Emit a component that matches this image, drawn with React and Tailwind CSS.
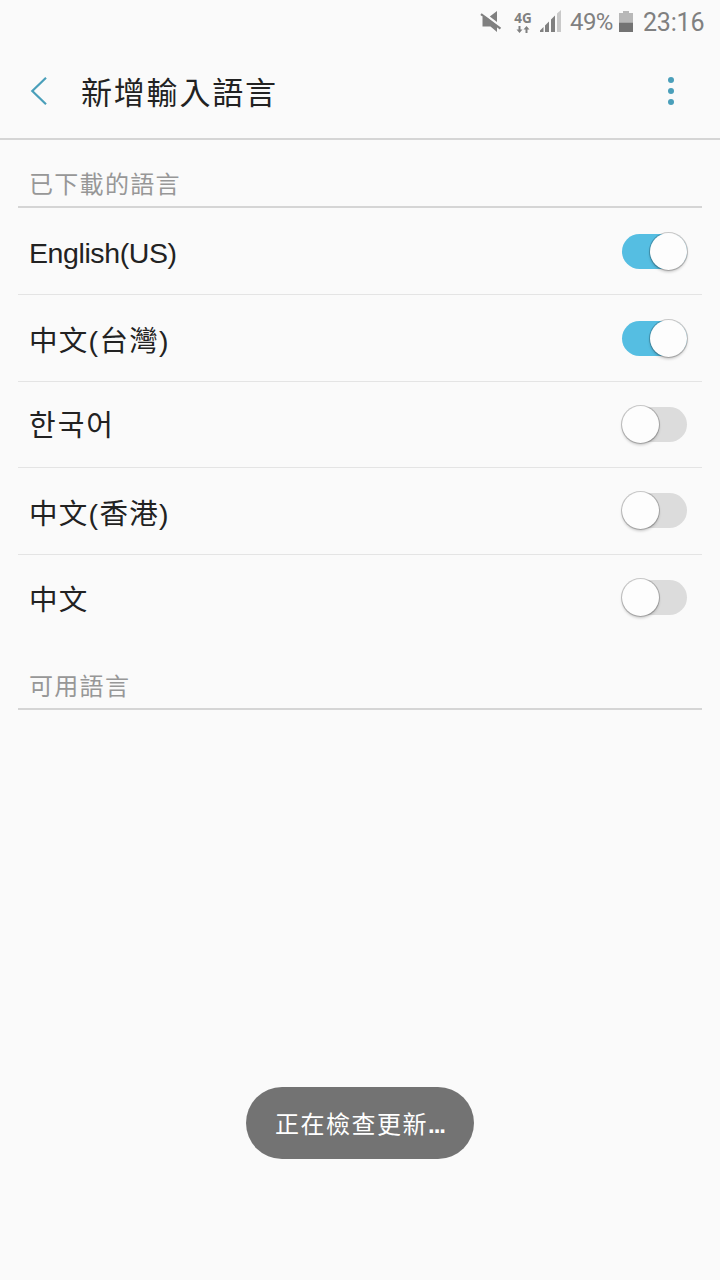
import { useState } from 'react';

const initialLanguages = [
  { id: 'en-US', label: 'English(US)', enabled: true, text: 'text-[28.5px] tracking-[-0.4px] pt-[3px]' },
  { id: 'zh-TW', label: '中文(台灣)', enabled: true, text: 'text-[28.5px] tracking-[1.3px] pt-[6px]' },
  { id: 'ko', label: '한국어', enabled: false, text: 'text-[29px] tracking-[2px] pt-[5px]' },
  { id: 'zh-HK', label: '中文(香港)', enabled: false, text: 'text-[28.5px] tracking-[1.3px] pt-[6px]' },
  { id: 'zh-CN', label: '中文', enabled: false, text: 'text-[28.5px] tracking-[1.3px] pt-[5px]' },
];

function StatusBar() {
  return (
    <div className="flex h-11 items-center justify-end pr-[15px] text-[#808080]">
      <svg width="22" height="22" viewBox="0 0 22 22" className="mr-[12px]" fill="currentColor">
        <path d="M17 0v11L9.8 5.6zM2.5 6 6 5.8 17 14.5V21l-6.5-5.5h-8z" />
        <path d="M1 3.2 20.5 17.6" stroke="currentColor" strokeWidth="2.2" />
      </svg>
      <div className="mr-2 flex w-[18px] flex-col items-center">
        <span className="font-['Open_Sans',sans-serif] text-[13.5px] leading-[13px] font-bold">4G</span>
        <svg width="14" height="7" viewBox="0 0 14 7" fill="currentColor" className="mt-px">
          <path d="M2.5 0h2v3.5h2l-3 3.5-3-3.5h2zM9.5 7h2V3.5h2L10.5 0l-3 3.5h2z" />
        </svg>
      </div>
      <svg width="22" height="22" viewBox="0 0 22 22" className="mr-[8px] -mt-0.5" fill="currentColor">
        <path d="M0 22v-1.5L3.5 17v5zM5 22v-6.5L9 11.5V22zM11 22V9.5L15 5.5V22z" />
        <path d="M17 22V3.5L21 0v22z" opacity=".4" />
      </svg>
      <span className="mr-[5px] w-[44px] font-['Roboto',sans-serif] text-[24px] leading-none tracking-[-0.6px] whitespace-nowrap">49%</span>
      <svg width="14" height="21" viewBox="0 0 14 21" className="mr-[10px] -mt-0.5">
        <path d="M4 0h6v2h4v9.5H0V2h4z" fill="#b8b8b8" />
        <path d="M0 11.5h14V21H0z" fill="#737373" />
      </svg>
      <span className="w-[62px] font-['Roboto',sans-serif] text-[25px] leading-none tracking-[-0.2px] whitespace-nowrap">23:16</span>
    </div>
  );
}

function Header() {
  return (
    <header className="flex h-24 items-center border-b-2 border-[#d5d5d5] pl-[30px]">
      <button aria-label="返回" className="flex">
        <svg width="18" height="30" viewBox="0 0 18 30" fill="none" stroke="#4a9fba" strokeWidth="2.2">
          <path d="M16 1.8 2.3 15 16 28.2" />
        </svg>
      </button>
      <h1 className="ml-[33px] flex-1 pt-[5px] text-[31px] leading-none tracking-[1.8px] text-[#222]">新增輸入語言</h1>
      <button aria-label="更多選項" className="mr-[46px] flex flex-col gap-[4.5px]">
        <span className="size-[6.4px] rounded-full bg-[#4a9fba]" />
        <span className="size-[6.4px] rounded-full bg-[#4a9fba]" />
        <span className="size-[6.4px] rounded-full bg-[#4a9fba]" />
      </button>
    </header>
  );
}

function SectionTitle({ children }) {
  return (
    <h2 className="mx-[18px] flex h-[68px] items-end border-b-2 border-[#d5d5d5] pb-[9px] pl-[11px] text-[24px] leading-none tracking-[1.3px] text-[#979797]">
      {children}
    </h2>
  );
}

function Toggle({ on, label, onClick }) {
  return (
    <button
      role="switch"
      aria-checked={on}
      aria-label={label}
      onClick={onClick}
      className={`flex h-[35px] w-[65px] items-center rounded-full ${on ? 'justify-end bg-[#55bee2]' : 'justify-start bg-[#dcdcdc]'}`}
    >
      <span className="size-[37px] shrink-0 rounded-full bg-[#fdfdfd] shadow-[0_0_0_1px_rgba(0,0,0,0.2),0_2px_3px_rgba(0,0,0,0.22)]" />
    </button>
  );
}

export default function App() {
  const [languages, setLanguages] = useState(initialLanguages);

  const toggle = (id) => {
    setLanguages(languages.map((l) => (l.id === id ? { ...l, enabled: !l.enabled } : l)));
  };

  return (
    <div className="relative h-[1280px] w-[720px] overflow-hidden bg-[#fafafa] font-['Liberation_Sans','Noto_Sans_CJK_TC','Noto_Sans_CJK_KR',sans-serif]">
      <StatusBar />
      <Header />
      <SectionTitle>已下載的語言</SectionTitle>
      <ul className="mx-[18px] pt-px pb-px">
        {languages.map((l) => (
          <li key={l.id} className="flex h-[86.4px] items-center justify-between border-b border-[#e4e4e4] pr-[15px] pl-[11px] last:border-b-0">
            <span className={`leading-none text-[#222] ${l.text}`}>{l.label}</span>
            <Toggle on={l.enabled} label={l.label} onClick={() => toggle(l.id)} />
          </li>
        ))}
      </ul>
      <SectionTitle>可用語言</SectionTitle>

      <div className="absolute top-[1087px] left-[246px] flex h-[72px] w-[228px] items-center justify-center rounded-full bg-[#737373] pt-1 text-[24px] leading-none tracking-[1.5px] whitespace-nowrap text-white">
        正在檢查更新<span className="font-bold tracking-[-1px]">...</span>
      </div>
    </div>
  );
}
